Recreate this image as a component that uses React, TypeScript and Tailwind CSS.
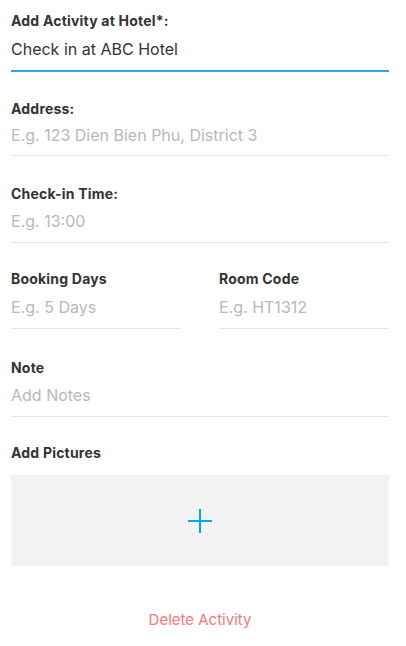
import React from "react";

const labelCls = "block text-[14px] leading-[17px] font-bold tracking-[0.2px] text-[#333333]";
const inputCls =
  "block w-full bg-transparent text-[16px] leading-[20px] text-[#333333] placeholder-[#b8b8b8] outline-none p-0";

function Field({
  label,
  placeholder,
  gap,
  className,
}: {
  label: string;
  placeholder: string;
  gap: string;
  className: string;
}) {
  return (
    <div className={className}>
      <label className={labelCls}>{label}</label>
      <input type="text" placeholder={placeholder} className={`${inputCls} ${gap}`} />
    </div>
  );
}

export default function App() {
  return (
    <div
      className="w-[406px] h-[646px] bg-white pl-[11px] pr-[17px] pt-[12px] overflow-hidden"
      style={{ fontFamily: "Inter, 'Liberation Sans', sans-serif" }}
    >
      {/* Title field (focused) */}
      <div className="border-b-2 border-[#2ba8e2] pb-[11px]">
        <label className={labelCls}>Add Activity at Hotel*:</label>
        <input type="text" defaultValue="Check in at ABC Hotel" className={`${inputCls} mt-[10px]`} />
      </div>

      <Field
        label="Address:"
        placeholder="E.g. 123 Dien Bien Phu, District 3"
        gap="mt-[8px]"
        className="mt-[28px] border-b border-[#e4e4e4] pb-[10px]"
      />

      <Field
        label="Check-in Time:"
        placeholder="E.g. 13:00"
        gap="mt-[9px]"
        className="mt-[29px] border-b border-[#e4e4e4] pb-[11px]"
      />

      <div className="mt-[27px] grid grid-cols-2 gap-[38px]">
        <Field
          label="Booking Days"
          placeholder="E.g. 5 Days"
          gap="mt-[10px]"
          className="border-b border-[#e4e4e4] pb-[11px]"
        />
        <Field
          label="Room Code"
          placeholder="E.g. HT1312"
          gap="mt-[10px]"
          className="border-b border-[#e4e4e4] pb-[11px]"
        />
      </div>

      <Field
        label="Note"
        placeholder="Add Notes"
        gap="mt-[9px]"
        className="mt-[30px] border-b border-[#e4e4e4] pb-[11px]"
      />

      <div className="mt-[27px]">
        <label className={labelCls}>Add Pictures</label>
        <button
          type="button"
          className="mt-[14px] w-full h-[91px] bg-[#f2f2f2] flex items-center justify-center"
        >
          <svg width="24" height="24" viewBox="0 0 24 24">
            <path d="M12 0v24M0 12h24" stroke="#00a8e8" strokeWidth="2" />
          </svg>
        </button>
      </div>

      <div className="mt-[44px] flex justify-center">
        <button type="button" className="text-[15px] leading-[20px] text-[#f77a7a]">
          Delete Activity
        </button>
      </div>
    </div>
  );
}
